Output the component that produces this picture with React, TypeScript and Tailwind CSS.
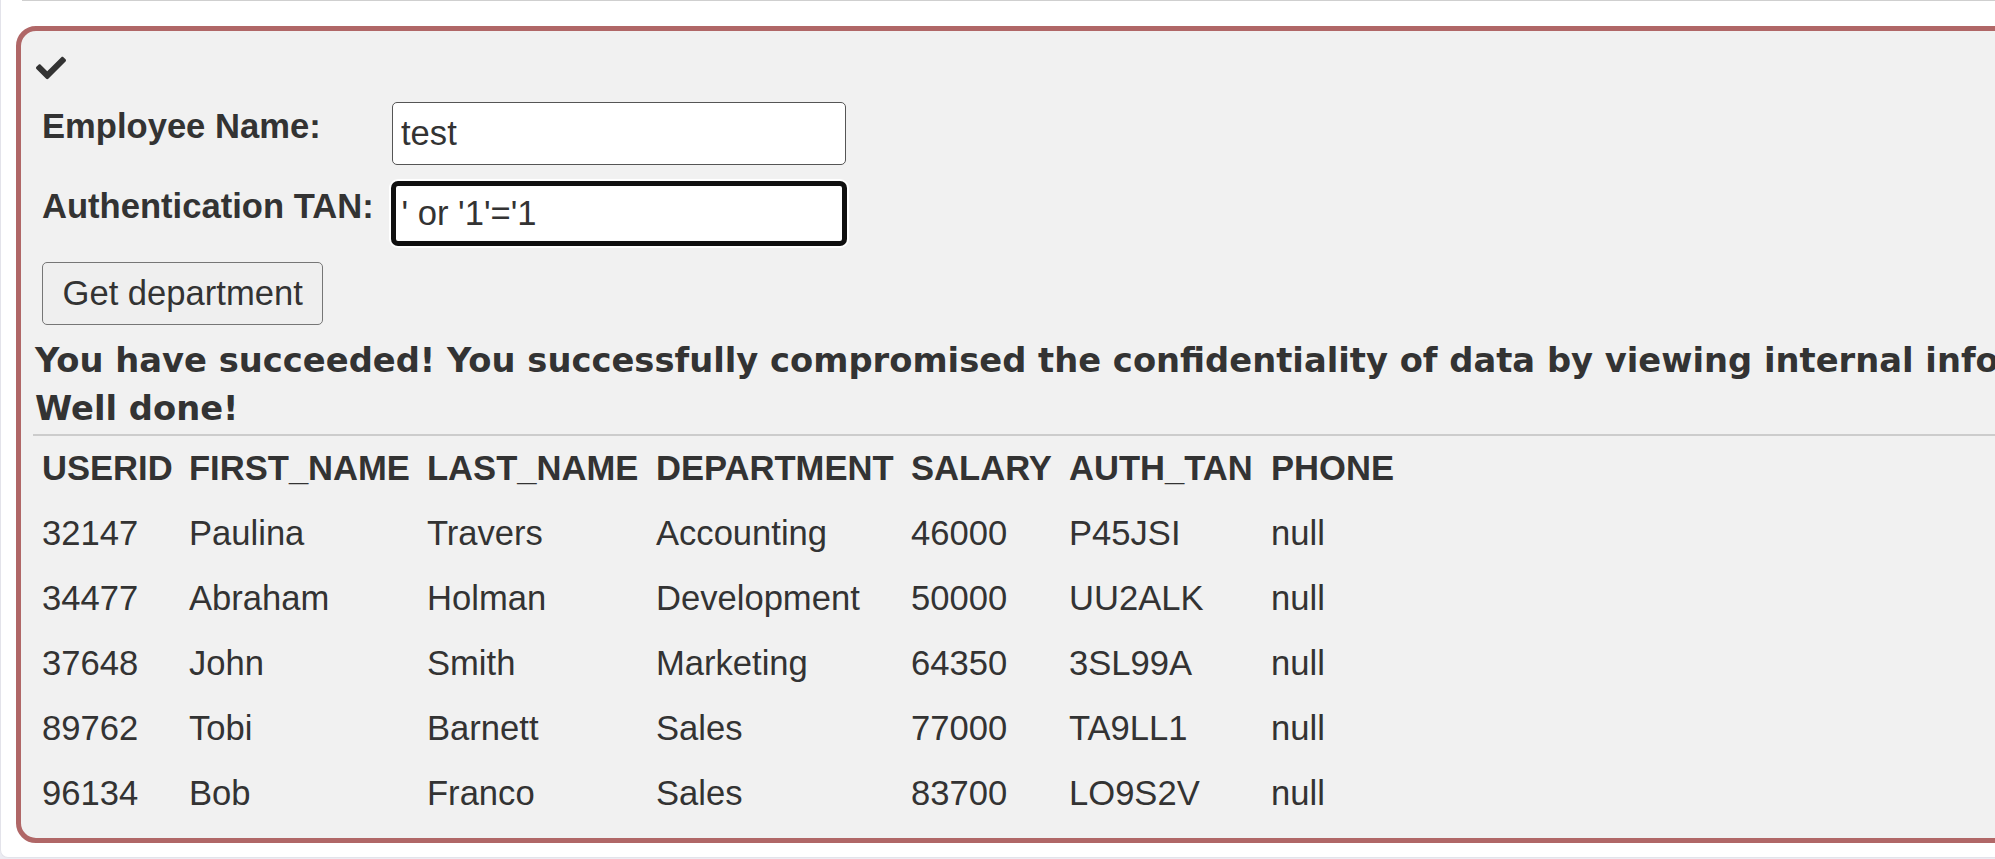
import React from 'react';

type Col = { name: string; w: string };

const cols: Col[] = [
  { name: 'USERID', w: 'w-[147px]' },
  { name: 'FIRST_NAME', w: 'w-[238px]' },
  { name: 'LAST_NAME', w: 'w-[229px]' },
  { name: 'DEPARTMENT', w: 'w-[255px]' },
  { name: 'SALARY', w: 'w-[158px]' },
  { name: 'AUTH_TAN', w: 'w-[202px]' },
  { name: 'PHONE', w: '' },
];

const employees = [
  ['32147', 'Paulina', 'Travers', 'Accounting', '46000', 'P45JSI', 'null'],
  ['34477', 'Abraham', 'Holman', 'Development', '50000', 'UU2ALK', 'null'],
  ['37648', 'John', 'Smith', 'Marketing', '64350', '3SL99A', 'null'],
  ['89762', 'Tobi', 'Barnett', 'Sales', '77000', 'TA9LL1', 'null'],
  ['96134', 'Bob', 'Franco', 'Sales', '83700', 'LO9S2V', 'null'],
];

const CheckIcon = () => (
  <svg viewBox="0 62 512 390" className="w-[30px] h-[24px] fill-[#333]">
    <path d="M173.898 439.404l-166.4-166.4c-9.997-9.997-9.997-26.206 0-36.204l36.203-36.204c9.997-9.998 26.207-9.998 36.204 0L192 312.69 432.095 72.596c9.997-9.997 26.207-9.997 36.204 0l36.203 36.204c9.997 9.997 9.997 26.206 0 36.204l-294.4 294.401c-9.998 9.997-26.207 9.997-36.204-.001z" />
  </svg>
);

export default function App() {
  return (
    <div className="h-[859px] w-full overflow-hidden bg-[#ececf2] font-['Liberation_Sans',Arial,sans-serif] text-[#333]">
      <div className="bg-white border-l border-b border-[#e3e3ea] rounded-bl-[8px] pb-[14px]">
        <div className="ml-[21px] h-px bg-[#cfcfcf]" />

        {/* attack panel */}
        <div className="ml-[15px] mt-[25px] w-[2400px] border-[5px] border-[#b06767] rounded-[20px] bg-[#f1f1f1] pl-[12px] pt-[25px] pb-[12px]">
          <div className="ml-[3px]">
            <CheckIcon />
          </div>

          <form className="mt-[22px] pl-[9px] flex flex-col gap-[17px] text-[34.6px]" onSubmit={(e) => e.preventDefault()}>
            <div className="flex items-start">
              <label className="w-[350px] mt-[4px] leading-[40px] font-bold">Employee Name:</label>
              <input
                defaultValue="test"
                className="w-[454px] h-[63px] bg-white border-[1.5px] border-[#555] rounded-[5px] pl-[8px] outline-none leading-normal"
              />
            </div>
            <div className="flex items-start">
              <label className="w-[350px] mt-[4px] leading-[40px] font-bold">Authentication TAN:</label>
              <input
                defaultValue="' or '1'='1"
                className="w-[454px] h-[63px] bg-white border-[4px] border-[#101010] rounded-[6px] pl-[5.5px] outline-none leading-normal shadow-[0_0_0_1px_#101010,0_0_0_3px_#ffffff]"
              />
            </div>
            <div>
              <button
                type="submit"
                className="h-[63px] px-[19.5px] bg-[#efefef] border-[1.5px] border-[#767676] rounded-[5px] leading-normal"
              >
                Get department
              </button>
            </div>
          </form>

          <div className="mt-[11.8px] pl-[2px] whitespace-nowrap font-['DejaVu_Sans',Verdana,sans-serif] font-bold text-[33.75px] leading-[48.5px]">
            You have succeeded! You successfully compromised the confidentiality of data by viewing internal information.
            <br />
            Well done!
          </div>

          <div className="h-[2px] bg-[#cccccc]" />

          <table className="ml-[9px] border-collapse text-[34.6px] leading-[40px]">
            <thead>
              <tr>
                {cols.map((c) => (
                  <th key={c.name} className={`${c.w} p-0 py-[12.5px] text-left font-bold`}>
                    {c.name}
                  </th>
                ))}
              </tr>
            </thead>
            <tbody>
              {employees.map((row) => (
                <tr key={row[0]}>
                  {row.map((cell, i) => (
                    <td key={i} className="p-0 py-[12.5px] whitespace-nowrap">
                      {cell}
                    </td>
                  ))}
                </tr>
              ))}
            </tbody>
          </table>
        </div>
      </div>
    </div>
  );
}
